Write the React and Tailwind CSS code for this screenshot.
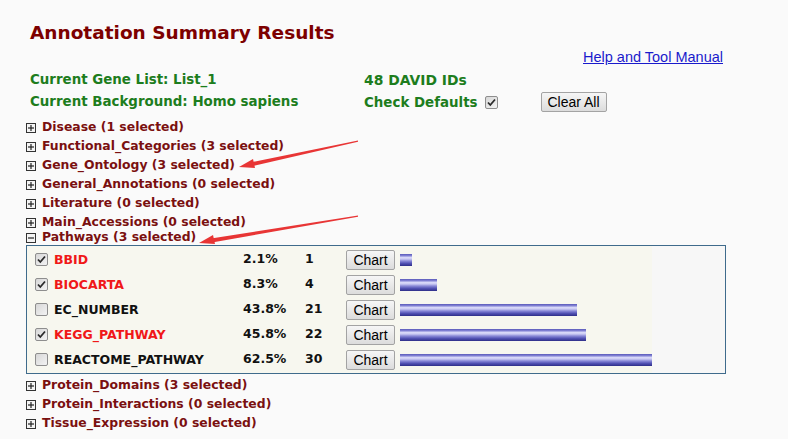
import React from "react";

const categoriesTop = [
  "Disease (1 selected)",
  "Functional_Categories (3 selected)",
  "Gene_Ontology (3 selected)",
  "General_Annotations (0 selected)",
  "Literature (0 selected)",
  "Main_Accessions (0 selected)",
];
const categoriesBottom = [
  "Protein_Domains (3 selected)",
  "Protein_Interactions (0 selected)",
  "Tissue_Expression (0 selected)",
];

const rows = [
  { name: "BBID", checked: true, pct: "2.1%", n: "1", w: 12 },
  { name: "BIOCARTA", checked: true, pct: "8.3%", n: "4", w: 37 },
  { name: "EC_NUMBER", checked: false, pct: "43.8%", n: "21", w: 177 },
  { name: "KEGG_PATHWAY", checked: true, pct: "45.8%", n: "22", w: 186 },
  { name: "REACTOME_PATHWAY", checked: false, pct: "62.5%", n: "30", w: 252 },
];

function ExpandIcon({ open }) {
  return (
    <svg width="10" height="10" viewBox="0 0 10 10" className="shrink-0">
      <rect x="0.5" y="0.5" width="9" height="9" fill="#f4f4f4" stroke="#333" />
      <line x1="2" y1="5" x2="8" y2="5" stroke="#222" strokeWidth="1.2" />
      {!open && <line x1="5" y1="2" x2="5" y2="8" stroke="#222" strokeWidth="1.2" />}
    </svg>
  );
}

function Checkbox({ checked }) {
  return (
    <svg width="13" height="13" viewBox="0 0 13 13" className="shrink-0">
      <defs>
        <linearGradient id="cbg" x1="0" y1="0" x2="1" y2="1">
          <stop offset="0" stopColor="#d6d6d6" />
          <stop offset="1" stopColor="#f4f4f4" />
        </linearGradient>
      </defs>
      <rect x="0.5" y="0.5" width="12" height="12" rx="1.5" fill="url(#cbg)" stroke="#8e8e8e" />
      {checked && (
        <path d="M3 6.5 L5.3 9 L10 3.5" fill="none" stroke="#2a2a2a" strokeWidth="1.8" />
      )}
    </svg>
  );
}

function Category({ label, open }) {
  return (
    <div className="flex items-center h-[19px]">
      <ExpandIcon open={open} />
      <span className="ml-[6px] text-[#7a1010] font-bold text-[12.4px]">{label}</span>
    </div>
  );
}

function Btn({ children, className }) {
  return (
    <button
      className={
        "border border-[#a3a3a3] rounded-[2px] bg-gradient-to-b from-[#f6f6f6] to-[#dcdcdc] text-[14px] text-black font-normal font-['Liberation_Sans',sans-serif] leading-none " +
        (className || "")
      }
    >
      {children}
    </button>
  );
}

export default function App() {
  return (
    <div className="relative min-h-[439px] bg-[#fafafa] font-['DejaVu_Sans',sans-serif] overflow-hidden">
      <div className="pt-[21px] pl-[30px]">
        <h1 className="text-[18.5px] font-bold text-[#7d0000] leading-[24px]">Annotation Summary Results</h1>
      </div>
      <div className="flex justify-end pr-[65px] mt-[4px] h-[17px] items-center">
        <a className="text-[14.5px] text-[#1a1acc] underline font-['Liberation_Sans',sans-serif]">Help and Tool Manual</a>
      </div>
      <div className="pl-[30px] mt-[4px] text-[13.4px] font-bold text-[#1d7d1d]">
        <div className="flex items-center h-[20px]">
          <span className="w-[334px]">Current Gene List: List_1</span>
          <span className="text-[13.9px]">48 DAVID IDs</span>
        </div>
        <div className="flex items-center h-[24px]">
          <span className="w-[334px]">Current Background: Homo sapiens</span>
          <span className="mt-[3px]">Check Defaults</span>
          <span className="ml-[7px]"><Checkbox checked /></span>
          <Btn className="ml-[43px] w-[66px] h-[20px]">Clear All</Btn>
        </div>
      </div>
      <div className="pl-[26px] mt-[4px]">
        {categoriesTop.map((c) => (
          <Category key={c} label={c} />
        ))}
        <div className="-mt-[4px]">
          <Category label="Pathways (3 selected)" open />
        </div>
        <div className="w-[700px] border border-[#3f6b8c] bg-[#f7f7f7] mt-[-2px]">
          <div className="w-[625px] bg-[#f7f7ef] pt-[2px]">
            {rows.map((r) => (
              <div key={r.name} className="flex items-center h-[25px] pl-[8px]">
                <span className="w-[19px] -mt-[3px]"><Checkbox checked={r.checked} /></span>
                <span className={"w-[189px] text-[12.5px] font-bold " + (r.checked ? "text-[#f01818]" : "text-[#111]") }>
                  {r.name}
                </span>
                <span className="w-[62px] text-[12.5px] font-bold text-[#111] -mt-[2px]">{r.pct}</span>
                <span className="w-[41px] text-[12.5px] font-bold text-[#111] -mt-[2px]">{r.n}</span>
                <span className="w-[54px] -mt-[2px]">
                  <Btn className="w-[49px] h-[20px]">Chart</Btn>
                </span>
                <span
                  className="h-[12px] -mt-[2px] bg-[linear-gradient(to_bottom,#5a5ab8_0%,#7a7ad0_12%,#dcdcfa_30%,#c8c8f2_42%,#8a8ad8_58%,#5252b4_78%,#2e2e88_100%)]"
                  style={{ width: r.w }}
                />
              </div>
            ))}
          </div>
        </div>
        <div className="mt-[2px]">
          {categoriesBottom.map((c) => (
            <Category key={c} label={c} />
          ))}
        </div>
      </div>
      <svg className="absolute left-0 top-0 pointer-events-none" width="788" height="439">
        <polygon points="358,140.5 250,162.5 251,166.5 358,141.8" fill="#e83535" />
        <polygon points="239,167 253,159 255,168" fill="#e83535" />
        <polygon points="358,215.5 211,238.5 212,242.5 358,216.8" fill="#e83535" />
        <polygon points="199,243 213,235 215,244" fill="#e83535" />
      </svg>
    </div>
  );
}
